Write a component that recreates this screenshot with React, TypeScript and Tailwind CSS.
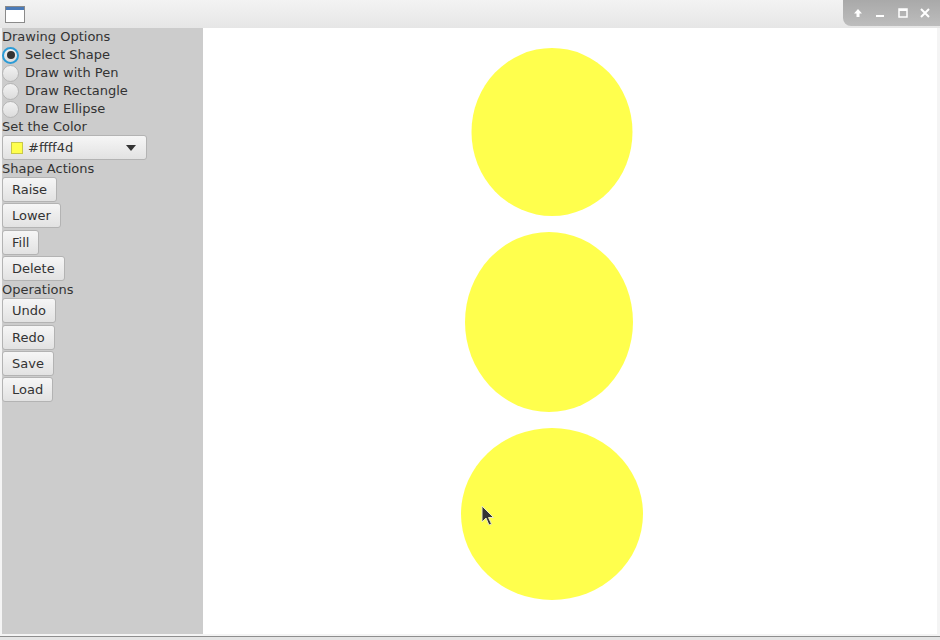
import React from "react";

const font = { fontFamily: '"DejaVu Sans", "Noto Sans", sans-serif' };

const Radio = (props: { label: string; checked?: boolean }) => (
  <div className="flex items-center h-[18px] gap-[6px]">
    <span
      className={
        "w-[17px] h-[17px] rounded-full flex items-center justify-center bg-gradient-to-b from-[#f2f2f2] to-[#dcdcdc] " +
        (props.checked
          ? "border-[2px] border-[#2b9bd6]"
          : "border border-[#b5b5b5]")
      }
    >
      {props.checked && <span className="w-[8px] h-[8px] rounded-full bg-[#333]" />}
    </span>
    <span>{props.label}</span>
  </div>
);

const Btn = (props: { label: string }) => (
  <div className="flex">
    <button className="h-[25px] px-[9px] mb-[1.33px] rounded-[3px] border border-[#b3b3b3] bg-gradient-to-b from-[#f6f6f6] to-[#e2e2e2] text-[#333] leading-none">
      {props.label}
    </button>
  </div>
);

export default function App() {
  return (
    <div className="w-[940px] h-[640px] bg-[#e4e4e4] flex flex-col text-[13px] text-[#333] overflow-hidden" style={font}>
      {/* title bar */}
      <div className="h-[28px] flex bg-gradient-to-b from-[#f3f3f3] to-[#e6e6e6]">
        <div className="flex-1 flex items-center pl-[5px]">
          <div className="w-[20px] h-[17px] border border-[#8a8a8a] bg-white flex flex-col">
            <div className="h-[3px] bg-[#4a7ab8]" />
          </div>
        </div>
        <div className="w-[97px] h-[26px] rounded-bl-[8px] bg-gradient-to-b from-[#a9a9a9] to-[#bdbdbd] flex items-center justify-around px-[4px] text-white">
          <svg width="12" height="12" viewBox="0 0 12 12">
            <path d="M6 2 L10 6.5 H7.5 V10 H4.5 V6.5 H2 Z" fill="white" />
          </svg>
          <svg width="12" height="12" viewBox="0 0 12 12">
            <rect x="2" y="8" width="8" height="2" fill="white" />
          </svg>
          <svg width="12" height="12" viewBox="0 0 12 12">
            <rect x="2" y="2" width="8" height="8" fill="none" stroke="white" strokeWidth="1.5" />
            <rect x="2" y="2" width="8" height="2" fill="white" />
          </svg>
          <svg width="12" height="12" viewBox="0 0 12 12">
            <path d="M2 2 L10 10 M10 2 L2 10" stroke="white" strokeWidth="2" />
          </svg>
        </div>
      </div>

      <div className="h-[609px] flex bg-[#f4f4f4] pl-[2px] pr-[3px] pb-[2px] border-b border-[#8e8e8e]">
        {/* sidebar */}
        <div className="w-[201px] bg-[#cccccc] flex flex-col leading-[18px]">
          <div className="h-[18px]">Drawing Options</div>
          <Radio label="Select Shape" checked />
          <Radio label="Draw with Pen" />
          <Radio label="Draw Rectangle" />
          <Radio label="Draw Ellipse" />
          <div className="h-[17px]">Set the Color</div>
          <div className="flex">
            <div className="w-[145px] h-[25px] rounded-[3px] border border-[#b3b3b3] bg-gradient-to-b from-[#f6f6f6] to-[#e2e2e2] flex items-center px-[8px] gap-[5px]">
              <span className="w-[12px] h-[12px] bg-[#ffff4d] border border-[#c8c84a]" />
              <span className="flex-1">#ffff4d</span>
              <svg width="10" height="6" viewBox="0 0 10 6" className="mr-[2px]">
                <path d="M0 0 H10 L5 6 Z" fill="#333" />
              </svg>
            </div>
          </div>
          <div className="h-[17px]">Shape Actions</div>
          <Btn label="Raise" />
          <Btn label="Lower" />
          <Btn label="Fill" />
          <Btn label="Delete" />
          <div className="h-[16px] leading-[16px]">Operations</div>
          <Btn label="Undo" />
          <Btn label="Redo" />
          <Btn label="Save" />
          <Btn label="Load" />
        </div>

        {/* canvas */}
        <div className="flex-1 bg-white relative">
          <svg width="734" height="607" className="absolute left-0 top-0">
            <ellipse cx="349" cy="104" rx="80.5" ry="84" fill="#ffff4d" />
            <ellipse cx="346" cy="294" rx="84" ry="90" fill="#ffff4d" />
            <ellipse cx="349" cy="486" rx="91" ry="86" fill="#ffff4d" />
          </svg>
          <svg width="14" height="22" viewBox="0 0 14 22" className="absolute left-[278px] top-[477px]">
            <path d="M1 1 L1 17 L5 13 L8 20 L10.5 19 L7.5 12.5 L12.5 12.5 Z" fill="#333" stroke="#e8e8c0" strokeWidth="1" />
          </svg>
        </div>
      </div>
    </div>
  );
}
